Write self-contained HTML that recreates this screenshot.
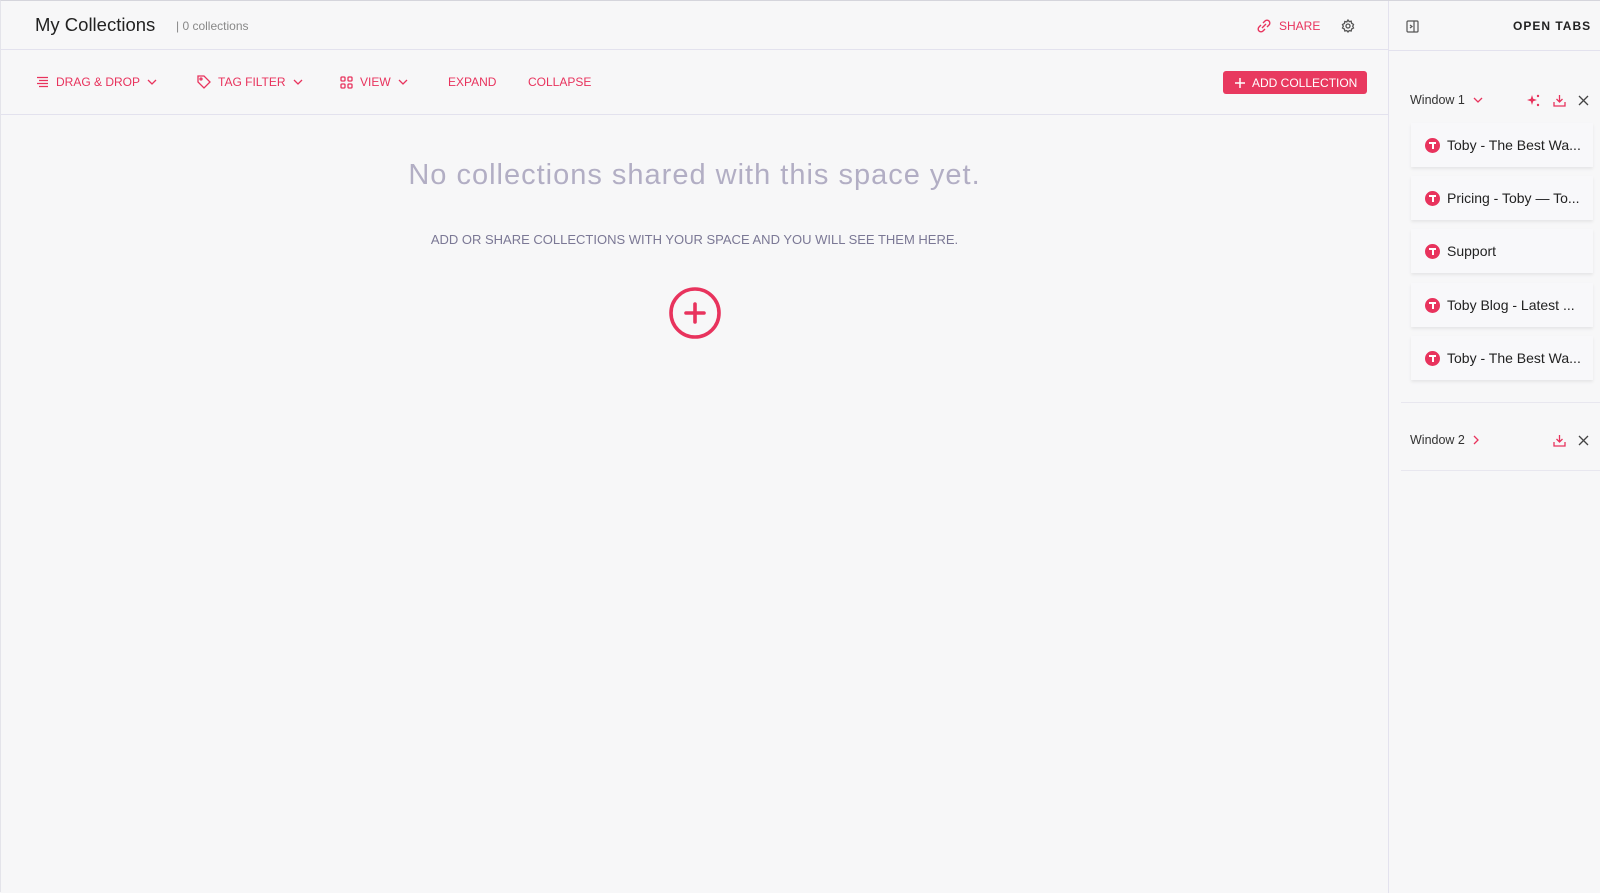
<!DOCTYPE html>
<html><head><meta charset="utf-8"><style>
*{margin:0;padding:0;box-sizing:border-box}
body{width:1600px;height:892px;background:#f7f7f8;font-family:"Liberation Sans",sans-serif;position:relative;overflow:hidden;border-top:1px solid #d5d5dc;border-left:1px solid #e4e4ea}
.abs{position:absolute;white-space:nowrap}
.tb{position:absolute;top:74px;font-size:12px;color:#e8335d;display:flex;align-items:center;gap:7px;white-space:nowrap}
svg{display:block}
.card{position:absolute;left:1410px;width:182px;height:44px;background:#f8f8fa;box-shadow:0 2px 3px rgba(0,0,0,.07);display:flex;align-items:center;padding-left:14px;font-size:14px;color:#222;white-space:nowrap}
.ticon{width:15px;height:15px;border-radius:50%;background:#e8335d;margin-right:7px;position:relative;flex:none}
.ticon:after{content:"";position:absolute;left:4px;top:4px;width:7px;height:2px;background:#fff}
.ticon:before{content:"";position:absolute;left:6.5px;top:5px;width:2px;height:6px;background:#fff}
</style></head><body>
<div class="abs" style="left:0;top:48px;width:1387px;height:1px;background:#e3e2ee"></div>
<div class="abs" style="left:0;top:113px;width:1387px;height:1px;background:#e3e2ee"></div>
<div class="abs" style="left:1387px;top:0;width:1px;height:892px;background:#e3e2ee"></div>
<div class="abs" style="left:1388px;top:49px;width:212px;height:1px;background:#e3e2ee"></div>

<div class="abs" style="left:34px;top:13px;font-size:18.5px;color:#222">My Collections</div>
<div class="abs" style="left:175px;top:18px;font-size:12px;color:#888">| 0 collections</div>

<div class="tb" style="left:35px"><svg width="13" height="12" viewBox="0 0 13 12" fill="none" stroke="#e8335d" stroke-width="1.3"><path d="M1 1.5h11M3 4.5h9M1 7.5h11M3 10.5h9"/></svg>DRAG &amp; DROP <svg width="10" height="6" viewBox="0 0 10 6" fill="none" stroke="#e8335d" stroke-width="1.3"><path d="M1 1l4 4 4-4"/></svg></div>
<div class="tb" style="left:196px"><svg width="14" height="14" viewBox="0 0 14 14" fill="none" stroke="#e8335d" stroke-width="1.3"><path d="M1 1h6l6 6-6 6-6-6z"/><circle cx="4" cy="4" r="1"/></svg>TAG FILTER <svg width="10" height="6" viewBox="0 0 10 6" fill="none" stroke="#e8335d" stroke-width="1.3"><path d="M1 1l4 4 4-4"/></svg></div>
<div class="tb" style="left:339px"><svg width="13" height="13" viewBox="0 0 13 13" fill="none" stroke="#e8335d" stroke-width="1.3"><rect x="1" y="1" width="4" height="4" rx="1"/><rect x="8" y="1" width="4" height="4" rx="1"/><rect x="1" y="8" width="4" height="4" rx="1"/><rect x="8" y="8" width="4" height="4" rx="1"/></svg>VIEW <svg width="10" height="6" viewBox="0 0 10 6" fill="none" stroke="#e8335d" stroke-width="1.3"><path d="M1 1l4 4 4-4"/></svg></div>
<div class="tb" style="left:447px">EXPAND</div>
<div class="tb" style="left:527px">COLLAPSE</div>

<div class="abs" style="left:1222px;top:70px;width:144px;height:23px;background:#e8395f;border-radius:3px;color:#fff;font-size:12px;display:flex;align-items:center;padding-left:12px;gap:7px"><svg width="10" height="10" viewBox="0 0 10 10" stroke="#fff" stroke-width="1.5"><path d="M5 0v10M0 5h10"/></svg>ADD COLLECTION</div>

<div class="abs" style="left:1256px;top:18px;font-size:12px;color:#e8335d;display:flex;align-items:center;gap:8px"><svg width="14" height="14" viewBox="0 0 14 14" fill="none" stroke="#e8335d" stroke-width="1.4"><path d="M6 4l2-2a2.8 2.8 0 014 4l-2 2M8 10l-2 2a2.8 2.8 0 01-4-4l2-2M5 9l4-4"/></svg>SHARE</div>
<svg class="abs" style="left:1340px;top:18px" width="14" height="14" viewBox="0 0 14 14" fill="none" stroke="#555" stroke-width="1.3"><circle cx="7" cy="7" r="2"/><path d="M7 1l1.2 1.6 2-.4.4 2L12.5 5.5 11.7 7.3 12.5 9l-1.9 1-.4 2-2-.4L7 13l-1.2-1.4-2 .4-.4-2L1.5 9l.8-1.7L1.5 5.5l1.9-1 .4-2 2 .4z"/></svg>

<div class="abs" style="left:0;top:158px;width:1387px;text-align:center;font-size:29px;color:#b2aec4;letter-spacing:1px">No collections shared with this space yet.</div>
<div class="abs" style="left:0;top:231px;width:1387px;text-align:center;font-size:13px;color:#7b7895">ADD OR SHARE COLLECTIONS WITH YOUR SPACE AND YOU WILL SEE THEM HERE.</div>
<svg class="abs" style="left:666px;top:284px" width="56" height="56" viewBox="0 0 56 56" fill="none" stroke="#e8335d" stroke-width="3.6"><circle cx="28" cy="28" r="24"/><path d="M28 19v18M19 28h18" stroke-linecap="round"/></svg>

<svg class="abs" style="left:1405px;top:19px" width="13" height="13" viewBox="0 0 13 13" fill="none" stroke="#555" stroke-width="1.2"><rect x="1" y="1" width="11" height="11" rx="1"/><path d="M8 1v11M4 5l2 1.5-2 1.5"/></svg>
<div class="abs" style="left:1512px;top:18px;font-size:12px;font-weight:bold;color:#222;letter-spacing:1px">OPEN TABS</div>

<div class="abs" style="left:1409px;top:92px;font-size:12.5px;color:#333;display:flex;align-items:center;gap:8px">Window 1 <svg width="10" height="6" viewBox="0 0 10 6" fill="none" stroke="#e8335d" stroke-width="1.3"><path d="M1 1l4 4 4-4"/></svg></div>
<svg class="abs" style="left:1525px;top:92px" width="15" height="15" viewBox="0 0 15 15" fill="#e8335d"><path d="M6 2l1.2 3.8L11 7l-3.8 1.2L6 12 4.8 8.2 1 7l3.8-1.2z"/><circle cx="12" cy="3" r="1.2"/><circle cx="12" cy="12" r="1.2"/></svg>
<svg class="abs" style="left:1552px;top:93px" width="13" height="13" viewBox="0 0 13 13" fill="none" stroke="#e8335d" stroke-width="1.3"><path d="M6.5 1v7M3.5 5l3 3 3-3M1 8v4h11V8"/></svg>
<svg class="abs" style="left:1577px;top:94px" width="11" height="11" viewBox="0 0 11 11" stroke="#444" stroke-width="1.3"><path d="M1 1l9 9M10 1l-9 9"/></svg>

<div class="card" style="top:122px"><span class="ticon"></span>Toby - The Best Wa...</div>
<div class="card" style="top:175px"><span class="ticon"></span>Pricing - Toby — To...</div>
<div class="card" style="top:228px"><span class="ticon"></span>Support</div>
<div class="card" style="top:282px"><span class="ticon"></span>Toby Blog - Latest ...</div>
<div class="card" style="top:335px"><span class="ticon"></span>Toby - The Best Wa...</div>
<div class="abs" style="left:1400px;top:401px;width:200px;height:1px;background:#e8e7ef"></div>

<div class="abs" style="left:1409px;top:432px;font-size:12.5px;color:#333;display:flex;align-items:center;gap:8px">Window 2 <svg width="6" height="10" viewBox="0 0 6 10" fill="none" stroke="#e8335d" stroke-width="1.3"><path d="M1 1l4 4-4 4"/></svg></div>
<svg class="abs" style="left:1552px;top:433px" width="13" height="13" viewBox="0 0 13 13" fill="none" stroke="#e8335d" stroke-width="1.3"><path d="M6.5 1v7M3.5 5l3 3 3-3M1 8v4h11V8"/></svg>
<svg class="abs" style="left:1577px;top:434px" width="11" height="11" viewBox="0 0 11 11" stroke="#444" stroke-width="1.3"><path d="M1 1l9 9M10 1l-9 9"/></svg>
<div class="abs" style="left:1400px;top:469px;width:200px;height:1px;background:#e8e7ef"></div>
</body></html>
